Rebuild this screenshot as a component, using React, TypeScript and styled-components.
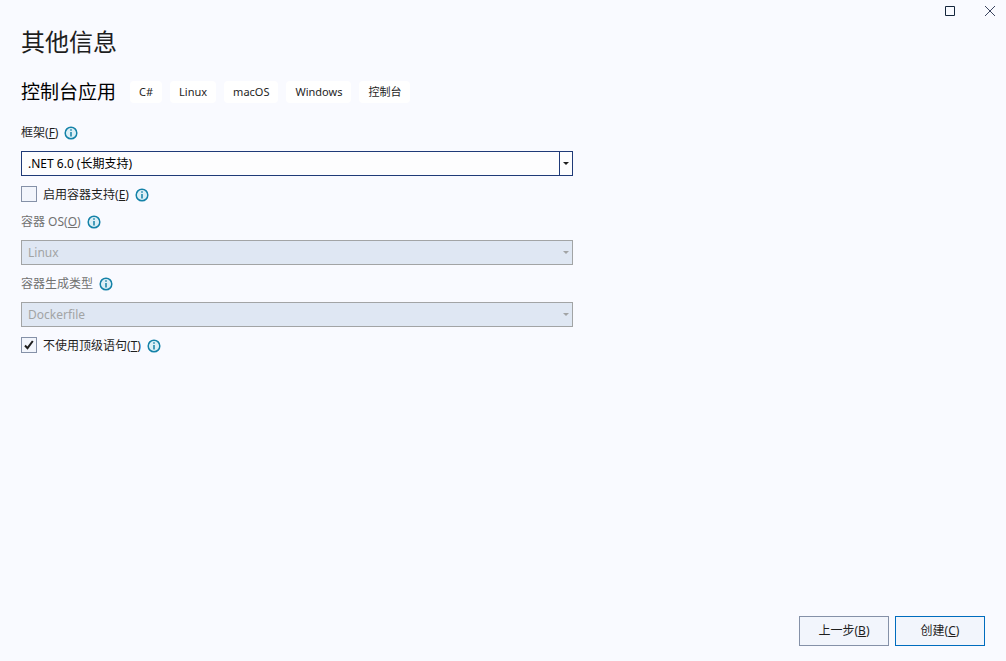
import React, { useState } from "react";
import styled, { createGlobalStyle } from "styled-components";

const GlobalStyle = createGlobalStyle`
  *, *::before, *::after { box-sizing: border-box; }
  body {
    margin: 0;
    background: #f9faff;
    color: #1e1e1e;
    font: 12px/16px "Noto Sans", "Noto Sans CJK SC", sans-serif;
  }
  button, select, input { font: inherit; color: inherit; margin: 0; }
`;

const Dialog = styled.div`
  min-height: 100vh;
  display: flex;
  flex-direction: column;
`;

const TitleBar = styled.div`
  display: flex;
  justify-content: flex-end;
  gap: 8px;
`;

const WindowButton = styled.button`
  width: 32px;
  height: 22px;
  padding: 0;
  border: 0;
  background: none;
  display: flex;
  align-items: center;
  justify-content: center;
`;

const Content = styled.main`
  flex: 1;
  padding: 0 21px;
`;

const Title = styled.h1`
  margin: 0;
  font-size: 24px;
  line-height: 40px;
  font-weight: 400;
`;

const ProjectRow = styled.div`
  display: flex;
  align-items: center;
  flex-wrap: wrap;
  gap: 14px;
  margin-top: 16px;
`;

const ProjectName = styled.h2`
  margin: 0;
  font-size: 19px;
  line-height: 28px;
  font-weight: 400;
  color: #000;
`;

const Tags = styled.ul`
  display: flex;
  gap: 8px;
  margin: 0;
  padding: 0;
  list-style: none;
`;

const Tag = styled.li`
  padding: 3px 9px;
  border-radius: 4px;
  background: #fff;
  font-size: 11px;
`;

const Form = styled.form`
  max-width: 552px;
  margin-top: 19px;
  display: flex;
  flex-direction: column;
`;

const Field = styled.div`
  display: flex;
  flex-direction: column;
  gap: 10px;
  margin-bottom: 10px;
  & + & {
    margin-top: 1px;
  }
`;

const LabelRow = styled.div<{ $muted?: boolean }>`
  display: flex;
  align-items: center;
  gap: 6px;
  color: ${(p) => (p.$muted ? "#717171" : "#1e1e1e")};
`;

const CheckRow = styled(LabelRow)`
  margin-bottom: 10px;
`;

const SelectBox = styled.div`
  position: relative;
  display: flex;
`;

const Select = styled.select`
  appearance: none;
  flex: 1;
  height: 25px;
  padding: 0 20px 0 6px;
  border: 1px solid #1f3a78;
  border-radius: 0;
  background: #fdfdfe;
  color: #000;
  opacity: 1;
  &:disabled {
    border-color: #a2a4a5;
    background: #dfe7f3;
    color: #a2a4a5;
  }
`;

const DropMark = styled.span<{ $muted?: boolean }>`
  position: absolute;
  top: 0;
  right: 0;
  bottom: 0;
  width: 14px;
  padding-right: 1px;
  display: flex;
  align-items: center;
  justify-content: center;
  border-left: 1px solid ${(p) => (p.$muted ? "transparent" : "#1f3a78")};
  color: ${(p) => (p.$muted ? "#a2a4a5" : "#1e1e1e")};
  pointer-events: none;
`;

const Checkbox = styled.input`
  appearance: none;
  width: 16px;
  height: 16px;
  border: 1px solid #8591a8;
  background: #f2f5fc;
  grid-area: 1 / 1;
`;

const CheckBoxStack = styled.span`
  display: grid;
  margin-bottom: 2px;
  svg {
    grid-area: 1 / 1;
    place-self: center;
    pointer-events: none;
    z-index: 1;
  }
`;

const Footer = styled.footer`
  display: flex;
  justify-content: flex-end;
  gap: 6px;
  padding: 0 21px 15px;
`;

const Button = styled.button<{ $primary?: boolean }>`
  width: 90px;
  height: 30px;
  padding: 0;
  border: 1px solid ${(p) => (p.$primary ? "#006cbe" : "#8591a8")};
  background: #f2f5fc;
`;

const InfoSvg = styled.svg`
  display: block;
  flex: none;
`;

function Info() {
  return (
    <InfoSvg width="14" height="14" viewBox="0 0 14 14" role="img" aria-label="信息">
      <circle cx="7" cy="7" r="5.8" fill="#dceff6" stroke="#1482a8" strokeWidth="1.5" />
      <path d="M7 3.3v1.5M7 6v4.5" stroke="#1482a8" strokeWidth="1.5" fill="none" />
    </InfoSvg>
  );
}

function Arrow() {
  return (
    <svg width="6" height="3" viewBox="0 0 6 3" aria-hidden="true">
      <path d="M0 0h6L3 3z" fill="currentColor" />
    </svg>
  );
}

function CheckField(props: {
  id: string;
  text: string;
  hotkey: string;
  initial?: boolean;
}) {
  const [on, setOn] = useState(!!props.initial);
  return (
    <CheckRow>
      <CheckBoxStack>
        <Checkbox
          id={props.id}
          type="checkbox"
          checked={on}
          onChange={(e) => setOn(e.target.checked)}
        />
        {on && (
          <svg width="10" height="10" viewBox="0 0 10 10" aria-hidden="true">
            <path d="M1 5.5l2.5 2.7L8.8 1" fill="none" stroke="#1e1e1e" strokeWidth="2" />
          </svg>
        )}
      </CheckBoxStack>
      <label htmlFor={props.id}>
        {props.text}(<u>{props.hotkey}</u>)
      </label>
      <Info />
    </CheckRow>
  );
}

function SelectField(props: {
  id: string;
  text: string;
  hotkey?: string;
  value: string;
  disabled?: boolean;
}) {
  return (
    <Field>
      <LabelRow $muted={props.disabled}>
        <label htmlFor={props.id}>
          {props.text}
          {props.hotkey && (
            <>
              (<u>{props.hotkey}</u>)
            </>
          )}
        </label>
        <Info />
      </LabelRow>
      <SelectBox>
        <Select id={props.id} disabled={props.disabled}>
          <option>{props.value}</option>
        </Select>
        <DropMark $muted={props.disabled}>
          <Arrow />
        </DropMark>
      </SelectBox>
    </Field>
  );
}

const tags = ["C#", "Linux", "macOS", "Windows", "控制台"];

export default function App() {
  return (
    <Dialog>
      <GlobalStyle />
      <TitleBar>
        <WindowButton aria-label="最大化">
          <svg width="10" height="10" viewBox="0 0 10 10">
            <path d="M.5.5h9v9h-9z" fill="none" stroke="#14263c" />
          </svg>
        </WindowButton>
        <WindowButton aria-label="关闭">
          <svg width="10" height="10" viewBox="0 0 10 10">
            <path d="M0 0l10 10M10 0L0 10" fill="none" stroke="#3b4560" />
          </svg>
        </WindowButton>
      </TitleBar>
      <Content>
        <Title>其他信息</Title>
        <ProjectRow>
          <ProjectName>控制台应用</ProjectName>
          <Tags>
            {tags.map((t) => (
              <Tag key={t}>{t}</Tag>
            ))}
          </Tags>
        </ProjectRow>
        <Form>
          <SelectField id="framework" text="框架" hotkey="F" value=".NET 6.0 (长期支持)" />
          <CheckField id="container" text="启用容器支持" hotkey="E" />
          <SelectField id="os" text="容器 OS" hotkey="O" value="Linux" disabled />
          <SelectField id="build" text="容器生成类型" value="Dockerfile" disabled />
          <CheckField id="toplevel" text="不使用顶级语句" hotkey="T" initial />
        </Form>
      </Content>
      <Footer>
        <Button type="button">
          上一步(<u>B</u>)
        </Button>
        <Button type="button" $primary>
          创建(<u>C</u>)
        </Button>
      </Footer>
    </Dialog>
  );
}
